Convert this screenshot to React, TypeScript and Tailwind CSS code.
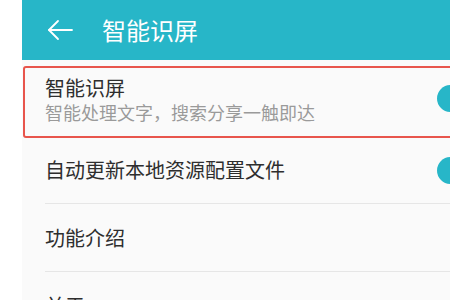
import React from 'react';

const font = { fontFamily: '"Noto Sans CJK SC", "Noto Sans", sans-serif' };

const Knob = () => <div className="w-[27px] h-[27px] rounded-full bg-[#27b6c8] shrink-0" />;

const BackArrow = () => (
  <svg width="26" height="22" viewBox="0 0 26 22" fill="none" stroke="#ffffff" strokeWidth="1.8" strokeLinecap="round" strokeLinejoin="round">
    <path d="M25 11H2" />
    <path d="M11 2L2 11L11 20" />
  </svg>
);

export default function App() {
  return (
    <div className="w-[450px] h-[300px] overflow-hidden bg-white flex" style={font}>
      {/* left page margin */}
      <div className="w-[22px] shrink-0 bg-white" />

      <div className="w-[480px] shrink-0 bg-[#fafafa] relative">
        {/* Title bar */}
        <div className="h-[60px] bg-[#27b6c8] flex items-center pl-[25px]">
          <BackArrow />
          <span className="ml-[29px] text-[24px] leading-none text-white">智能识屏</span>
        </div>

        {/* Row 1: switch with subtitle */}
        <div className="h-[77px] flex items-center pl-[23px] pr-[38px]">
          <div className="flex-1 min-w-0 flex flex-col">
            <span className="text-[20px] leading-[26px] text-[#2e2e2e]">智能识屏</span>
            <span className="text-[18px] leading-[22px] text-[#9a9a9a]">智能处理文字，搜索分享一触即达</span>
          </div>
          <Knob />
        </div>

        {/* Row 2 */}
        <div className="pl-[23px]">
          <div className="h-[67px] flex items-center pr-[38px] border-b border-[#e6e6e6]">
            <span className="flex-1 text-[20px] leading-none text-[#2e2e2e]">自动更新本地资源配置文件</span>
            <Knob />
          </div>
        </div>

        {/* Row 3 */}
        <div className="pl-[23px]">
          <div className="h-[68px] flex items-center border-b border-[#e6e6e6]">
            <span className="text-[20px] leading-none text-[#2e2e2e]">功能介绍</span>
          </div>
        </div>

        {/* Row 4 */}
        <div className="pl-[23px]">
          <div className="h-[68px] flex items-center">
            <span className="text-[20px] leading-none text-[#2e2e2e]">关于</span>
          </div>
        </div>

        {/* highlight annotation */}
        <div className="absolute left-[1px] top-[66px] w-[500px] h-[72px] border-2 border-[#e8554c] rounded-[3px] pointer-events-none" />
      </div>
    </div>
  );
}
